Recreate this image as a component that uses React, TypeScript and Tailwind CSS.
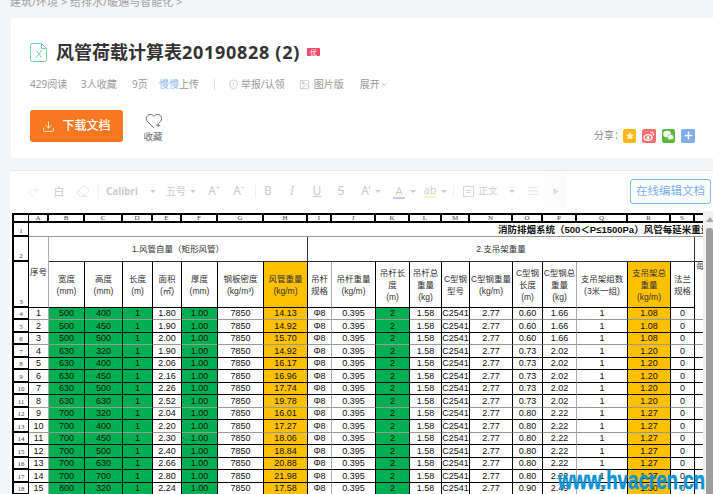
import { Download, Plus, Star, ChevronDown, ShieldAlert, Image, Redo2, Eraser, AlignJustify, Play } from "lucide-react";

const colWidths = [
  "w-[17px]", "w-[20px]", "w-[36px]", "w-[38px]", "w-[30px]", "w-[29px]", "w-[36px]", "w-[46px]", "w-[44px]", "w-[24px]", "w-[44px]",
  "w-[34px]", "w-[32px]", "w-[28px]", "w-[43px]", "w-[30px]", "w-[34px]", "w-[51px]", "w-[43px]", "w-[24px]", "w-[25px]",
];

const letters = ["A", "B", "C", "D", "E", "F", "G", "H", "I", "J", "K", "L", "M", "N", "O", "P", "Q", "R", "S", "T"];

const headers = [
  "宽度\n(mm)", "高度\n(mm)", "长度\n(m)", "面积\n(㎡)", "厚度\n(mm)", "钢板密度\n(kg/m³)", "风管重量\n(kg/m)",
  "吊杆\n规格", "吊杆重量\n(kg/m)", "吊杆长\n度\n(m)", "吊杆总\n重量\n(kg)", "C型钢\n型号", "C型钢重量\n(kg/m)",
  "C型钢\n长度\n(m)", "C型钢总\n重量\n(kg)", "支吊架组数\n(3米一组)", "支吊架总\n重量\n(kg/m)", "法兰\n规格",
];

// 序号, 宽, 高, 面积, 风管重量, C型钢长度, C型钢总重, 支吊架总重
const rows = [
  ["1", "500", "400", "1.80", "14.13", "0.60", "1.66", "1.08"],
  ["2", "500", "450", "1.90", "14.92", "0.60", "1.66", "1.08"],
  ["3", "500", "500", "2.00", "15.70", "0.60", "1.66", "1.08"],
  ["4", "630", "320", "1.90", "14.92", "0.73", "2.02", "1.20"],
  ["5", "630", "400", "2.06", "16.17", "0.73", "2.02", "1.20"],
  ["6", "630", "450", "2.16", "16.96", "0.73", "2.02", "1.20"],
  ["7", "630", "500", "2.26", "17.74", "0.73", "2.02", "1.20"],
  ["8", "630", "630", "2.52", "19.78", "0.73", "2.02", "1.20"],
  ["9", "700", "320", "2.04", "16.01", "0.80", "2.22", "1.27"],
  ["10", "700", "400", "2.20", "17.27", "0.80", "2.22", "1.27"],
  ["11", "700", "450", "2.30", "18.06", "0.80", "2.22", "1.27"],
  ["12", "700", "500", "2.40", "18.84", "0.80", "2.22", "1.27"],
  ["13", "700", "630", "2.66", "20.88", "0.80", "2.22", "1.27"],
  ["14", "700", "700", "2.80", "21.98", "0.80", "2.22", "1.27"],
  ["15", "800", "320", "2.24", "17.58", "0.90", "2.49", "1.30"],
];

const rowHeights = ["h-[12px]", "h-[13px]"];
const softBottom = [0, 2, 7, 9];
const softRight = [0, 8, 15];

function cellValues(r: string[]) {
  return [
    { v: r[0] },
    { v: r[1], c: "bg-[#00b050]" },
    { v: r[2], c: "bg-[#00b050]" },
    { v: "1", c: "bg-[#00b050]" },
    { v: r[3] },
    { v: "1.00", c: "bg-[#00b050]" },
    { v: "7850" },
    { v: r[4], c: "bg-[#ffc000]" },
    { v: "Φ8" },
    { v: "0.395" },
    { v: "2", c: "bg-[#00b050]" },
    { v: "1.58" },
    { v: "C2541" },
    { v: "2.77" },
    { v: r[5] },
    { v: r[6] },
    { v: "1" },
    { v: r[7], c: "bg-[#ffc000]" },
    { v: "0" },
    { v: "" },
  ];
}

function RowHead({ n }: { n: number | string }) {
  return (
    <td className="border-l-2 border-r border-b-2 border-black p-0 text-center align-bottom font-['Liberation_Serif'] text-[7px] leading-[8px] text-[#444]">
      {n}
    </td>
  );
}

function Sheet() {
  return (
    <table className="w-[708px] table-fixed border-separate border-spacing-0 text-[9px] leading-none text-[#111]">
      <colgroup>
        {colWidths.map((w, i) => (
          <col key={i} className={w} />
        ))}
      </colgroup>
      <tbody>
        <tr className="h-[10px]">
          <td className="border-l-2 border-t-2 border-b-2 border-r border-black p-0" />
          {letters.map((l) => (
            <td key={l} className="overflow-hidden border-t-2 border-b-2 border-r-2 border-black p-0 text-center font-['Liberation_Serif'] text-[7px] leading-[6px] text-[#444]">
              {l}
            </td>
          ))}
        </tr>
        <tr className="h-[14px]">
          <RowHead n={1} />
          <td colSpan={20} className="overflow-hidden whitespace-nowrap border-b border-[#999] p-0 pl-[469px] text-[9.5px] font-bold">
            消防排烟系统（500＜P≤1500Pa）风管每延米重量
          </td>
        </tr>
        <tr className="h-[25px]">
          <RowHead n={2} />
          <td rowSpan={2} className="border-r border-b border-r-[#aaa] border-b-black p-0 text-center align-middle text-[8.5px] text-[#222]">
            序号
          </td>
          <td colSpan={7} className="border-r border-b border-[#333] p-0 text-center text-[8.5px] text-[#333]">
            1.风管自量（矩形风管）
          </td>
          <td colSpan={11} className="border-r border-b border-[#333] p-0 text-center text-[8.5px] text-[#333]">
            2.支吊架重量
          </td>
          <td className="border-b border-[#333] p-0" />
        </tr>
        <tr className="h-[46px]">
          <RowHead n={3} />
          {headers.map((h, i) => (
            <td
              key={i}
              className={`overflow-hidden whitespace-pre border-r border-b border-b-black p-0 text-center text-[8.5px] leading-[12px] text-[#333] ${
                i === 6 || i === 16 ? "bg-[#ffc000]" : ""
              } ${i === 7 || i === 14 ? "border-r-[#aaa]" : "border-r-black"}`}
            >
              {h}
            </td>
          ))}
          <td className="p-0 pl-[1px] align-top text-[8.5px] text-[#555]">每</td>
        </tr>
        {rows.map((r, i) => (
          <tr key={r[0]} className={rowHeights[i % 2]}>
            <RowHead n={i + 4} />
            {cellValues(r).map((cell, j) => (
              <td
                key={j}
                className={`overflow-hidden whitespace-nowrap border-r border-b p-0 text-center ${cell.c ?? ""} ${
                  softRight.includes(j) ? "border-r-[#aaa]" : "border-r-black"
                } ${softBottom.includes(i) ? "border-b-[#999]" : "border-b-black"}`}
              >
                {cell.v}
              </td>
            ))}
          </tr>
        ))}
      </tbody>
    </table>
  );
}

function Caret({ className }: { className: string }) {
  return <span className={`h-0 w-0 shrink-0 border-x-[3px] border-t-[3px] border-x-transparent border-t-[#cfcfcf] ${className}`} />;
}

function Tool({ w, children, className = "" }: { w: string; children: React.ReactNode; className?: string }) {
  return <span className={`flex shrink-0 items-center justify-center whitespace-nowrap ${w} ${className}`}>{children}</span>;
}

function Toolbar() {
  return (
    <div className="flex h-[40px] items-center whitespace-nowrap text-[#cdcdcd]">
      <Redo2 size={13} strokeWidth={1} className="ml-[17px] shrink-0 text-[#e2e2e2]" />
      <Tool w="w-[12px]" className="ml-[13px] text-[11px] leading-none">白</Tool>
      <Eraser size={14} strokeWidth={1} className="ml-[11px] shrink-0" />
      <span className="ml-[8px] h-[14px] w-px shrink-0 bg-[#f0f0f0]" />
      <Tool w="w-[30px]" className="ml-[8px] text-[10px] font-bold">Calibri</Tool>
      <Caret className="ml-[13px]" />
      <Tool w="w-[20px]" className="ml-[10px] text-[10px]">五号</Tool>
      <Caret className="ml-[4px]" />
      <Tool w="w-[12px]" className="ml-[12px] text-[12px]">A⁺</Tool>
      <Tool w="w-[12px]" className="ml-[13px] text-[12px]">A⁻</Tool>
      <span className="ml-[10px] h-[14px] w-px shrink-0 bg-[#f0f0f0]" />
      <Tool w="w-[10px]" className="ml-[7px] text-[12px]">B</Tool>
      <Tool w="w-[10px]" className="ml-[14px] text-[12px] italic">I</Tool>
      <Tool w="w-[10px]" className="ml-[15px] text-[12px] underline">U</Tool>
      <Tool w="w-[10px]" className="ml-[14px] text-[12px] line-through">S</Tool>
      <Tool w="w-[12px]" className="ml-[14px] text-[12px]">A'</Tool>
      <Caret className="ml-[3px]" />
      <span className="ml-[12px] flex w-[12px] shrink-0 justify-center border-b-2 border-[#bcd0f5] text-[11px] leading-[13px]">A</span>
      <Caret className="ml-[5px]" />
      <span className="ml-[8px] flex w-[12px] shrink-0 justify-center border-b-2 border-[#fbf6c0] text-[11px] leading-[12px]">ab</span>
      <Caret className="ml-[5px]" />
      <span className="ml-[6px] h-[12px] w-px shrink-0 bg-[#f0f0f0]" />
      <span className="ml-[9px] flex h-[11px] w-[11px] shrink-0 items-center justify-center border border-[#d8d8d8]">
        <span className="h-[3px] w-[5px] border-y border-[#d8d8d8]" />
      </span>
      <Tool w="w-[20px]" className="ml-[4px] text-[9.5px]">正文</Tool>
      <Caret className="ml-[11px]" />
      <AlignJustify size={12} strokeWidth={1} className="ml-[12px] shrink-0" />
      <div className="ml-[5px] flex h-[34px] w-[22px] shrink-0 items-center justify-center bg-[#fbfbfb]">
        <Play size={7} className="fill-[#dedede] text-[#dedede]" />
      </div>
      <button className="ml-[64px] h-[25px] w-[81px] shrink-0 rounded-[3px] border border-[#7fb5f0] text-[11.5px] text-[#7aaeee]">在线编辑文档</button>
    </div>
  );
}

function Meta() {
  return (
    <div className="mt-[14px] flex h-4 items-center whitespace-nowrap text-[10px] text-[#999]">
      <span className="w-[51px]">429阅读</span>
      <span className="w-[51px]">3人收藏</span>
      <span className="w-[27px]">9页</span>
      <span>
        <span className="text-[#8cb4e8]">慢慢</span>上传
      </span>
      <span className="ml-[15px] h-[11px] w-px bg-[#ddd]" />
      <ShieldAlert size={11} strokeWidth={1} className="ml-[13px]" />
      <span className="ml-[2px]">举报/认领</span>
      <Image size={11} strokeWidth={1} className="ml-[14px]" />
      <span className="ml-[4px]">图片版</span>
      <span className="ml-[16px]">展开</span>
      <ChevronDown size={7} className="ml-[1px]" />
    </div>
  );
}

function Share() {
  return (
    <div className="mb-px flex items-center whitespace-nowrap text-[10px] text-[#888]">
      <span className="w-[29px]">分享：</span>
      <span className="flex h-[14px] w-[13px] items-center justify-center rounded-[2px] bg-[#fdb61b]">
        <Star size={8} className="fill-[#fff3c4] text-[#fff3c4]" />
      </span>
      <span className="ml-[6px] flex h-[14px] w-[14px] items-center justify-center rounded-[2px] bg-[#f97070]">
        <svg viewBox="0 0 14 14" className="h-[14px] w-[14px]" fill="none" stroke="#fff" strokeWidth="1.2">
          <ellipse cx="6" cy="8.5" rx="4" ry="2.8" />
          <circle cx="6" cy="8.7" r="1" fill="#fff" />
          <path d="M8.5 3a3 3 0 0 1 3 3.5" />
        </svg>
      </span>
      <span className="ml-[6px] flex h-[14px] w-[13px] items-center justify-center rounded-[2px] bg-[#5cb83c]">
        <svg viewBox="0 0 14 14" className="h-[13px] w-[13px]" fill="#fff">
          <ellipse cx="5.5" cy="5.5" rx="4.2" ry="3.5" />
          <ellipse cx="9.2" cy="8.8" rx="3.4" ry="2.8" stroke="#5cb83c" strokeWidth="0.6" />
        </svg>
      </span>
      <span className="ml-[6px] flex h-[14px] w-[14px] items-center justify-center rounded-[2px] bg-[#83aceb]">
        <Plus size={11} strokeWidth={3} className="text-white" />
      </span>
    </div>
  );
}

export default function App() {
  return (
    <div className="relative flex h-[494px] w-[713px] flex-col overflow-hidden bg-[#f4f5f7] [font-family:'Noto_Sans','Noto_Sans_CJK_SC',sans-serif]">
      <div className="ml-[10px] mt-[-6px] h-[24px] text-[11px] leading-[16px] text-[#a3a3a3]">建筑/环境 &gt; 给排水/暖通与智能化 &gt;</div>

      <section className="ml-[11px] h-[140px] rounded-l-[2px] bg-white pl-[19px] pr-[18px] pt-[24px]">
        <div className="flex h-[20px] items-center">
          <svg viewBox="0 0 18 19" className="h-[19px] w-[18px]" fill="none" stroke="#6fd5a8" strokeWidth="1">
            <path d="M2.5.5h9l5 5v11a2 2 0 0 1-2 2h-12a2 2 0 0 1-2-2v-14a2 2 0 0 1 2-2zM11.5.5v5h5" />
            <path d="M6 7.5l5.5 7M11.5 7.5L6 14.5" />
          </svg>
          <h1 className="ml-[8px] text-[18px] font-bold text-[#333]">
            风管荷载计算表<span className="tracking-[0.7px]">20190828 (2)</span>
          </h1>
          <span className="ml-[7px] flex h-[8px] w-[13px] items-center justify-center rounded-[1px] bg-[#f0476a] text-[7px] leading-none text-white">优</span>
        </div>
        <Meta />
        <div className="mt-[18px] flex items-end justify-between">
          <div className="flex">
            <button className="flex h-[32px] w-[93px] items-center justify-center gap-[7px] rounded-[3px] bg-[#f77821] text-[12px] font-medium text-white">
              <Download size={13} strokeWidth={1.5} />
              下载文档
            </button>
            <div className="ml-[20px] flex w-[20px] flex-col items-center text-[#666]">
              <svg viewBox="0 0 18 17" className="mt-[2px] h-[17px] w-[17px]" fill="none" stroke="currentColor" strokeWidth="1">
                <path d="M10 15l-1 1-6.5-6.5a4.4 4.4 0 0 1 6.5-6l.5.5.5-.5a4.4 4.4 0 0 1 6.5 6l-1.5 1.5" />
                <path d="M12 13.5h4M14 11.5v4" />
              </svg>
              <span className="mt-[1px] whitespace-nowrap text-[9.5px] leading-[14px]">收藏</span>
            </div>
          </div>
          <Share />
        </div>
      </section>

      <section className="ml-[10px] mt-[12px] flex flex-1 flex-col overflow-hidden border-t border-[#e6e7e8] bg-white">
        <Toolbar />
        <div className="flex min-h-0 flex-1">
          <div className="w-[693px] overflow-hidden pl-[2px] pt-[2px] [font-family:'Liberation_Sans','Noto_Sans_CJK_SC',sans-serif]">
            <Sheet />
          </div>
          <div className="flex w-[10px] flex-col bg-[#f1f1f1]">
            <span className="ml-[3px] mt-[6px] h-0 w-0 border-x-[4px] border-b-[5px] border-x-transparent border-b-[#a8a8a8]" />
            <span className="ml-[3px] mt-[6px] flex-1 rounded-t-[3px] bg-[#9e9e9e]" />
          </div>
        </div>
      </section>

      <div className="absolute left-[558px] top-[466px] origin-left scale-x-[0.72] whitespace-nowrap text-[26px] font-bold leading-[28px] text-[#0a93d6] [-webkit-text-stroke:0.5px_#0a93d6] [font-family:'Liberation_Sans',sans-serif]">
        www.hvacren.cn
      </div>
    </div>
  );
}
